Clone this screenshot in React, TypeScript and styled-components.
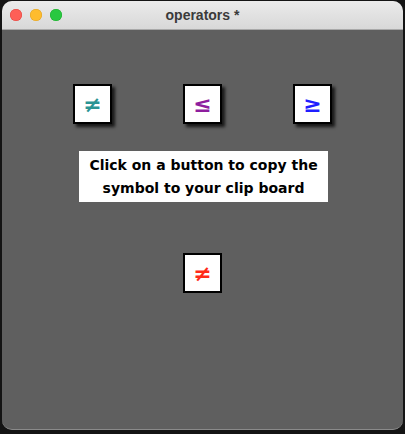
import styled, { createGlobalStyle } from "styled-components";

const GlobalStyle = createGlobalStyle`
  html, body {
    margin: 0;
    padding: 0;
    background: #141414;
  }
`;

const symbols = [
  { char: "≠", color: "#2a9494" },
  { char: "≤", color: "#8e1e9e" },
  { char: "≥", color: "#1f1fff" },
];

export const App = () => {
  return (
    <>
      <GlobalStyle />
      <Screen>
        <Window>
          <TitleBar>
            <Lights>
              <Light $color="#fe5f57" $edge="#e0443e" />
              <Light $color="#febc2e" $edge="#dea123" />
              <Light $color="#28c840" $edge="#1aab29" />
            </Lights>
            <Title>operators *</Title>
          </TitleBar>
          <Content>
            <ButtonRow>
              {symbols.map((s) => (
                <Cell key={s.char}>
                  <SymbolButton type="button" $color={s.color} $shadow>
                    {s.char}
                  </SymbolButton>
                </Cell>
              ))}
            </ButtonRow>
            <Label>
              Click on a button to copy the
              <br />
              symbol to your clip board
            </Label>
            <SymbolButton type="button" $color="#ff2a1a">
              ≠
            </SymbolButton>
          </Content>
        </Window>
      </Screen>
    </>
  );
};

const Screen = styled.div`
  width: 405px;
  height: 434px;
  padding: 1px 2px 4px 2px;
  box-sizing: border-box;
  display: flex;
`;

const Window = styled.div`
  flex: 1;
  display: flex;
  flex-direction: column;
  border-radius: 10px;
  overflow: hidden;
  background: #5f5f5f;
  border-bottom: 1px solid #8a8a8a;
`;

const TitleBar = styled.div`
  position: relative;
  height: 28px;
  flex-shrink: 0;
  display: flex;
  align-items: center;
  justify-content: center;
  background: linear-gradient(#ebebeb, #d8d8d8);
  border-bottom: 1px solid #a9a9a9;
`;

const Lights = styled.div`
  position: absolute;
  left: 8px;
  top: 8px;
  display: flex;
  gap: 8px;
`;

const Light = styled.span<{ $color: string; $edge: string }>`
  width: 12px;
  height: 12px;
  border-radius: 50%;
  background: ${({ $color }) => $color};
  box-shadow: inset 0 0 0 0.5px ${({ $edge }) => $edge};
`;

const Title = styled.span`
  font-family: "Liberation Sans", Arial, sans-serif;
  font-weight: bold;
  font-size: 14px;
  color: #3a3a3a;
`;

const Content = styled.div`
  flex: 1;
  display: flex;
  flex-direction: column;
  align-items: center;
  padding-top: 54px;
`;

const ButtonRow = styled.div`
  display: grid;
  grid-template-columns: repeat(3, 110px);
`;

const Cell = styled.div`
  display: flex;
  justify-content: center;
`;

const SymbolButton = styled.button<{ $color: string; $shadow?: boolean }>`
  width: 39px;
  height: 40px;
  box-sizing: border-box;
  border: 2px solid #000;
  background: #fff;
  padding: 0;
  display: flex;
  align-items: center;
  justify-content: center;
  font-family: "DejaVu Sans", sans-serif;
  font-weight: bold;
  font-size: 22px;
  color: ${({ $color }) => $color};
  box-shadow: ${({ $shadow }) =>
    $shadow ? "3px 3px 3px rgba(0, 0, 0, 0.75)" : "none"};
  cursor: pointer;
`;

const Label = styled.div`
  margin-top: 27px;
  margin-bottom: 51px;
  margin-left: 2px;
  width: 249px;
  height: 51px;
  box-sizing: border-box;
  background: #fff;
  display: flex;
  align-items: center;
  justify-content: center;
  text-align: center;
  font-family: "DejaVu Sans", sans-serif;
  font-weight: bold;
  font-size: 14px;
  line-height: 23px;
  color: #000;
`;

export default App;
